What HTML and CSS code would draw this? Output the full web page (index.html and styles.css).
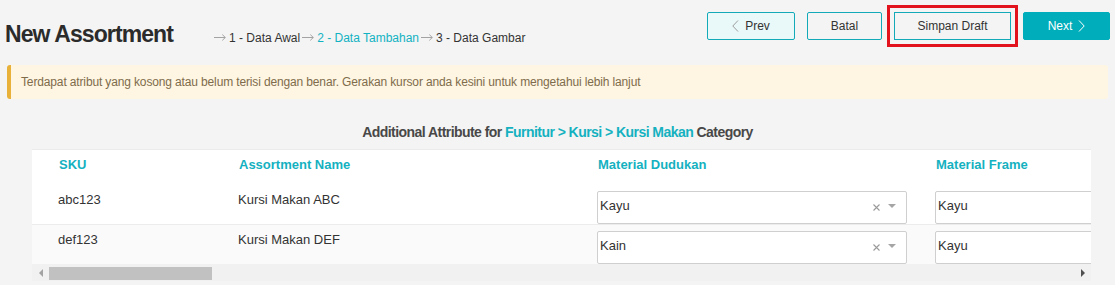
FILE: index.html
```html
<!DOCTYPE html>
<html lang="id">
<head>
  <meta charset="UTF-8">
  <meta name="viewport" content="width=device-width, initial-scale=1.0">
  <title>New Assortment</title>
  <link rel="stylesheet" href="styles.css">
</head>
<body>
  <header class="topbar">
    <div class="heading">
      <h1 class="title">New Assortment</h1>
      <ol class="steps">
        <li class="step"><svg class="step-arrow" width="12" height="7" viewBox="0 0 12 7"><path d="M0 3.5H11.3M8.3 0.6L11.3 3.5L8.3 6.4" fill="none" stroke="#a3a3a3" stroke-width="1"/></svg>1 - Data Awal</li>
        <li class="step active"><svg class="step-arrow" width="12" height="7" viewBox="0 0 12 7"><path d="M0 3.5H11.3M8.3 0.6L11.3 3.5L8.3 6.4" fill="none" stroke="#a3a3a3" stroke-width="1"/></svg>2 - Data Tambahan</li>
        <li class="step"><svg class="step-arrow" width="12" height="7" viewBox="0 0 12 7"><path d="M0 3.5H11.3M8.3 0.6L11.3 3.5L8.3 6.4" fill="none" stroke="#a3a3a3" stroke-width="1"/></svg>3 - Data Gambar</li>
      </ol>
    </div>
    <div class="actions">
      <button class="btn btn-prev">
        <svg class="chev" width="7" height="12" viewBox="0 0 7 12"><polyline points="6,0.5 0.8,6 6,11.5" fill="none" stroke="#9c9c9c" stroke-width="1"/></svg>
        Prev
      </button>
      <button class="btn btn-cancel">Batal</button>
      <button class="btn btn-draft">Simpan Draft</button>
      <button class="btn btn-next">
        Next
        <svg class="chev" width="7" height="12" viewBox="0 0 7 12"><polyline points="1,0.5 6.2,6 1,11.5" fill="none" stroke="#ffffff" stroke-width="1"/></svg>
      </button>
    </div>
  </header>

  <div class="alert">Terdapat atribut yang kosong atau belum terisi dengan benar. Gerakan kursor anda kesini untuk mengetahui lebih lanjut</div>

  <h2 class="category">Additional Attribute for <span class="path">Furnitur &gt; Kursi &gt; Kursi Makan</span> Category</h2>

  <div class="grid-wrap">
    <div class="grid-scroll">
      <table class="grid">
        <colgroup>
          <col class="col-sku">
          <col class="col-name">
          <col class="col-attr">
          <col class="col-attr">
        </colgroup>
        <thead>
          <tr class="head-row">
            <th>SKU</th>
            <th>Assortment Name</th>
            <th>Material Dudukan</th>
            <th>Material Frame</th>
          </tr>
        </thead>
        <tbody>
          <tr>
            <td>abc123</td>
            <td>Kursi Makan ABC</td>
            <td class="cell-select">
              <div class="select">
                <span class="select-value">Kayu</span>
                <svg class="select-clear" width="7" height="7" viewBox="0 0 7 7"><path d="M0.5 0.5L6.5 6.5M6.5 0.5L0.5 6.5" stroke="#9a9a9a" stroke-width="1.1"/></svg>
                <span class="select-caret"></span>
              </div>
            </td>
            <td class="cell-select">
              <div class="select">
                <span class="select-value">Kayu</span>
                <svg class="select-clear" width="7" height="7" viewBox="0 0 7 7"><path d="M0.5 0.5L6.5 6.5M6.5 0.5L0.5 6.5" stroke="#9a9a9a" stroke-width="1.1"/></svg>
                <span class="select-caret"></span>
              </div>
            </td>
          </tr>
          <tr class="row-alt">
            <td>def123</td>
            <td>Kursi Makan DEF</td>
            <td class="cell-select">
              <div class="select">
                <span class="select-value">Kain</span>
                <svg class="select-clear" width="7" height="7" viewBox="0 0 7 7"><path d="M0.5 0.5L6.5 6.5M6.5 0.5L0.5 6.5" stroke="#9a9a9a" stroke-width="1.1"/></svg>
                <span class="select-caret"></span>
              </div>
            </td>
            <td class="cell-select">
              <div class="select">
                <span class="select-value">Kayu</span>
                <svg class="select-clear" width="7" height="7" viewBox="0 0 7 7"><path d="M0.5 0.5L6.5 6.5M6.5 0.5L0.5 6.5" stroke="#9a9a9a" stroke-width="1.1"/></svg>
                <span class="select-caret"></span>
              </div>
            </td>
          </tr>
        </tbody>
      </table>
    </div>
    <div class="scrollbar">
      <span class="sb-btn"><span class="sb-arrow sb-left"></span></span>
      <span class="sb-thumb"></span>
      <span class="sb-btn sb-btn-end"><span class="sb-arrow sb-right"></span></span>
    </div>
  </div>
</body>
</html>
```

FILE: styles.css
```css
body {
  margin: 0;
  background: #f4f4f4;
  font-family: "Liberation Sans", Arial, sans-serif;
  color: #333;
}

.topbar {
  display: flex;
  align-items: flex-start;
  height: 40px;
  box-sizing: border-box;
  padding: 12px 5px 0 5px;
}

.heading {
  display: flex;
  align-items: baseline;
  margin-top: 8px;
}

.title {
  margin: 0;
  font-size: 23px;
  line-height: 28px;
  font-weight: bold;
  letter-spacing: -0.9px;
  color: #2b2b2b;
}

.steps {
  display: flex;
  list-style: none;
  margin: 0 0 0 41px;
  padding: 0;
  font-size: 12px;
  color: #333;
}

.step-arrow {
  margin: 0 3px 0 2px;
  vertical-align: 1px;
}

.step:first-child .step-arrow {
  margin-left: 0;
}

.step.active {
  color: #12b2c2;
}

.actions {
  margin-left: auto;
  display: flex;
  gap: 12px;
}

.btn {
  display: flex;
  align-items: center;
  justify-content: center;
  gap: 6px;
  height: 28px;
  padding: 0;
  border: 1px solid #12aab8;
  border-radius: 2px;
  background: transparent;
  font-family: "Liberation Sans", Arial, sans-serif;
  font-size: 12px;
  color: #333;
  cursor: pointer;
}

.btn-prev {
  width: 88px;
  background: #e9f8f9;
}

.btn-cancel {
  width: 75px;
}

.btn-draft {
  width: 117px;
  border-radius: 0;
  outline: 3px solid #e3131d;
  outline-offset: 4px;
}

.btn-next {
  width: 87px;
  background: #00adba;
  border-color: #00adba;
  color: #fff;
}

.alert {
  display: flex;
  align-items: center;
  height: 34px;
  box-sizing: border-box;
  margin: 25px 7px 0 7px;
  padding-left: 10px;
  border-left: 4px solid #e8b23a;
  border-radius: 3px;
  background: #fef6e2;
  font-size: 12px;
  letter-spacing: -0.14px;
  color: #7f6c4c;
}

.category {
  margin: 24px 0 8px 0;
  text-align: center;
  font-size: 14px;
  line-height: 18px;
  font-weight: bold;
  letter-spacing: -0.55px;
  color: #484848;
}

.category .path {
  color: #14b1c0;
}

.grid-wrap {
  margin-left: 32px;
  width: 1059px;
}

.grid-scroll {
  overflow: hidden;
  background: #fff;
  border-top: 1px solid #ebebeb;
}

.grid {
  width: 1215px;
  table-layout: fixed;
  border-collapse: separate;
  border-spacing: 0;
  font-size: 13px;
  line-height: 16px;
}

.col-sku { width: 180px; }
.col-name { width: 359px; }
.col-attr { width: 338px; }

.head-row {
  height: 35px;
}

.grid th {
  padding: 7px 0 0 27px;
  vertical-align: top;
  text-align: left;
  font-weight: bold;
  color: #14b1c0;
}

.grid td {
  padding: 7px 0 0 26px;
  vertical-align: top;
  white-space: nowrap;
}

.grid tbody tr:first-child td {
  border-bottom: 1px solid #ececec;
}

.grid td.cell-select {
  padding-top: 6px;
}

.row-alt {
  background: #fafafa;
}

.select {
  display: flex;
  align-items: center;
  width: 310px;
  height: 33px;
  box-sizing: border-box;
  padding: 0 10px 0 2px;
  border: 1px solid #cfcfcf;
  border-radius: 2px;
  background: #fff;
}

.select-value {
  flex: 1;
  align-self: flex-start;
  padding-top: 5px;
  line-height: 17px;
  color: #333;
}

.select-clear {
  margin-right: 8px;
}

.select-caret {
  width: 0;
  height: 0;
  margin-bottom: 3px;
  border-left: 4px solid transparent;
  border-right: 4px solid transparent;
  border-top: 4px solid #a5a5a5;
}

.scrollbar {
  display: flex;
  height: 17px;
  background: #f1f1f1;
}

.sb-btn {
  display: flex;
  align-items: center;
  justify-content: center;
  width: 17px;
}

.sb-btn-end {
  margin-left: auto;
}

.sb-thumb {
  width: 163px;
  height: 13px;
  margin-top: 3px;
  background: #c1c1c1;
}

.sb-arrow {
  width: 0;
  height: 0;
  border-top: 4px solid transparent;
  border-bottom: 4px solid transparent;
}

.sb-left {
  border-right: 4px solid #a3a3a3;
}

.sb-right {
  border-left: 4px solid #505050;
}
```
